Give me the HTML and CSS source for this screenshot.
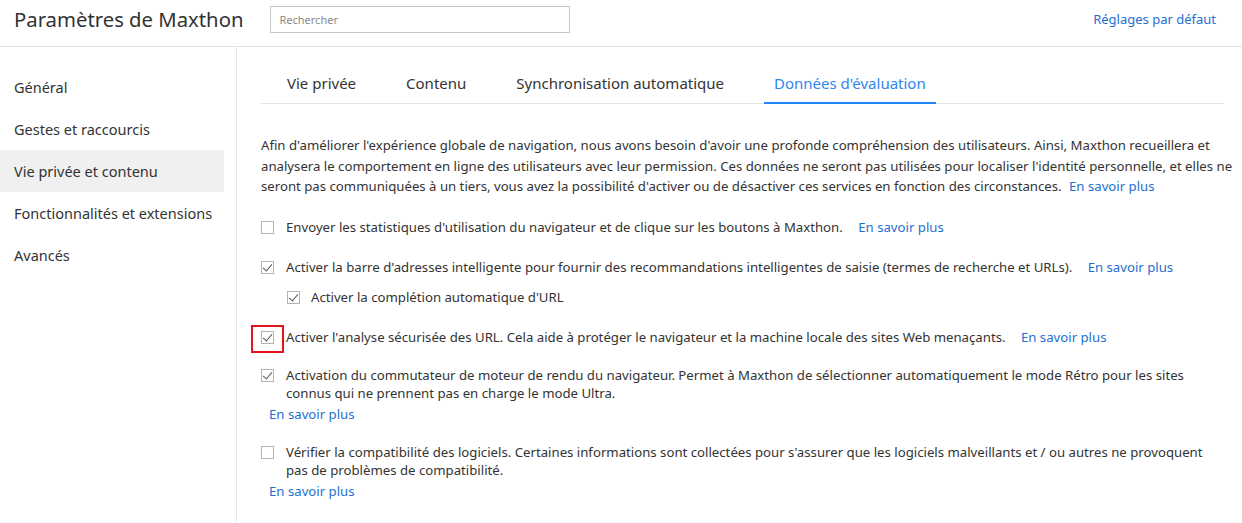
FILE: index.html
```html
<!DOCTYPE html>
<html lang="fr">
<head>
    <meta charset="UTF-8">
    <meta name="viewport" content="width=device-width, initial-scale=1.0">
    <title>Paramètres de Maxthon</title>
    <link rel="stylesheet" href="styles.css">
</head>
<body>
    <header class="topbar">
        <h1>Paramètres de Maxthon</h1>
        <input type="text" class="search" placeholder="Rechercher">
        <a href="#" class="reset">Réglages par défaut</a>
    </header>

    <div class="layout">
        <nav class="sidebar">
            <a href="#" class="nav-item">Général</a>
            <a href="#" class="nav-item">Gestes et raccourcis</a>
            <a href="#" class="nav-item active">Vie privée et contenu</a>
            <a href="#" class="nav-item">Fonctionnalités et extensions</a>
            <a href="#" class="nav-item">Avancés</a>
        </nav>

        <main class="content">
            <div class="tabs">
                <a href="#" class="tab">Vie privée</a>
                <a href="#" class="tab">Contenu</a>
                <a href="#" class="tab">Synchronisation automatique</a>
                <a href="#" class="tab active">Données d'évaluation</a>
            </div>

            <p class="intro">Afin d'améliorer l'expérience globale de navigation, nous avons besoin d'avoir une profonde compréhension des utilisateurs. Ainsi, Maxthon recueillera et<br>analysera le comportement en ligne des utilisateurs avec leur permission. Ces données ne seront pas utilisées pour localiser l'identité personnelle, et elles ne<br>seront pas communiquées à un tiers, vous avez la possibilité d'activer ou de désactiver ces services en fonction des circonstances. <a href="#" class="more">En savoir plus</a></p>

            <div class="option spaced">
                <span class="box"></span>
                <span class="label">Envoyer les statistiques d'utilisation du navigateur et de clique sur les boutons à Maxthon. <a href="#" class="more inline">En savoir plus</a></span>
            </div>

            <div class="option spaced">
                <span class="box checked"></span>
                <span class="label">Activer la barre d'adresses intelligente pour fournir des recommandations intelligentes de saisie (termes de recherche et URLs). <a href="#" class="more inline">En savoir plus</a></span>
            </div>
            <div class="option sub spaced">
                <span class="box checked"></span>
                <span class="label">Activer la complétion automatique d'URL</span>
            </div>

            <div class="option">
                <span class="box checked marked"></span>
                <span class="label">Activer l'analyse sécurisée des URL. Cela aide à protéger le navigateur et la machine locale des sites Web menaçants. <a href="#" class="more inline">En savoir plus</a></span>
            </div>

            <div class="option">
                <span class="box checked"></span>
                <span class="label">Activation du commutateur de moteur de rendu du navigateur. Permet à Maxthon de sélectionner automatiquement le mode Rétro pour les sites<br>connus qui ne prennent pas en charge le mode Ultra.</span>
            </div>
            <a href="#" class="more block">En savoir plus</a>

            <div class="option">
                <span class="box"></span>
                <span class="label">Vérifier la compatibilité des logiciels. Certaines informations sont collectées pour s'assurer que les logiciels malveillants et / ou autres ne provoquent<br>pas de problèmes de compatibilité.</span>
            </div>
            <a href="#" class="more block">En savoir plus</a>
        </main>
    </div>
</body>
</html>
```

FILE: styles.css
```css
body {
    font-family: "Noto Sans", "Open Sans", sans-serif;
    margin: 0;
    padding: 0;
    background: #fff;
    color: #333;
    font-size: 13.2px;
    overflow: hidden;
}
a {
    text-decoration: none;
}
.topbar {
    display: flex;
    align-items: center;
    height: 47px;
    box-sizing: border-box;
    padding: 0 26px 8px 14px;
    border-bottom: 1px solid #e3e3e3;
}
.topbar h1 {
    margin: 0;
    font-size: 20.3px;
    font-weight: normal;
    color: #333;
    line-height: 27px;
}
.search {
    width: 300px;
    height: 27px;
    box-sizing: border-box;
    margin-left: 27px;
    border: 1px solid #c6c6c6;
    padding: 0 8px;
    font-family: inherit;
    font-size: 11px;
    outline: none;
}
.search::placeholder {
    color: #8a8a8a;
}
.reset {
    margin-left: auto;
    color: #1f6fd0;
    font-size: 13px;
}
.layout {
    display: flex;
    min-height: 475px;
}
.sidebar {
    flex: none;
    width: 237px;
    box-sizing: border-box;
    padding: 19px 12px 0 0;
    border-right: 1px solid #e6e6e6;
}
.nav-item {
    display: block;
    height: 42px;
    line-height: 42px;
    padding-left: 14px;
    font-size: 14.5px;
    color: #333;
}
.nav-item.active {
    background: #f0f0f0;
}
.content {
    flex: 1;
    min-width: 0;
    padding: 16px 18px 0 24px;
}
.tabs {
    display: flex;
    gap: 30px;
    padding-left: 16px;
    border-bottom: 1px solid #e3e3e3;
}
.tab {
    padding: 0 10px;
    height: 40px;
    line-height: 40px;
    font-size: 15px;
    color: #333;
}
.tab.active {
    color: #2f86ee;
    border-bottom: 2px solid #1f86f5;
    height: 39px;
    margin-bottom: -1px;
}
.intro {
    margin: 31px 0 21px;
    line-height: 20.5px;
    white-space: nowrap;
}
.more {
    color: #1f6fd0;
    margin-left: 4px;
}
.more.inline {
    margin-left: 12px;
}
.more.block {
    display: block;
    margin: 3px 0 20px 8px;
    line-height: 18px;
}
.option {
    display: flex;
    align-items: flex-start;
    line-height: 18px;
    margin-bottom: 20px;
}
.option.spaced {
    margin-bottom: 22px;
}
.option:has(+ .block) {
    margin-bottom: 0;
}
.option:has(+ .sub) {
    margin-bottom: 12px;
}
.option.sub {
    padding-left: 26px;
}
.option.sub .box {
    margin-right: 11px;
}
.box {
    position: relative;
    flex: none;
    width: 13px;
    height: 13px;
    box-sizing: border-box;
    margin: 3px 12px 0 0;
    border: 1px solid #b4b4b4;
    background: #fff;
}
.box.checked::after {
    content: "";
    position: absolute;
    left: 3px;
    top: 0px;
    width: 4px;
    height: 8px;
    border: solid #555;
    border-width: 0 1.6px 1.6px 0;
    transform: rotate(40deg);
}
.box.marked::before {
    content: "";
    position: absolute;
    left: -11px;
    top: -7px;
    width: 33px;
    height: 28px;
    box-sizing: border-box;
    border: 2px solid #e3141c;
}
.label {
    white-space: nowrap;
}
```
